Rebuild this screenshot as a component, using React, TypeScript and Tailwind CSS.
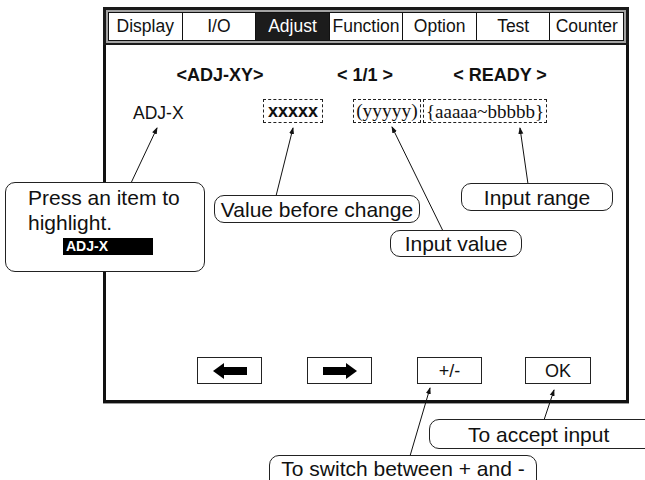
import React from 'react'

const tabs = ['Display', 'I/O', 'Adjust', 'Function', 'Option', 'Test', 'Counter']

function Arrow({ dir }: { dir: 'left' | 'right' }) {
  return (
    <svg width="34" height="16" viewBox="0 0 34 16">
      {dir === 'left' ? (
        <polygon points="0,8 11,0 11,4 34,4 34,12 11,12 11,16" fill="#000" />
      ) : (
        <polygon points="34,8 23,0 23,4 0,4 0,12 23,12 23,16" fill="#000" />
      )}
    </svg>
  )
}

function Callout({ className, children }: { className: string; children: React.ReactNode }) {
  return (
    <div
      className={`absolute flex items-center justify-center rounded-[10px] border border-[#222] bg-white text-[21px] leading-none text-[#111] ${className}`}
    >
      <span>{children}</span>
    </div>
  )
}

export default function App() {
  return (
    <div className="relative h-[480px] w-[645px] overflow-hidden bg-white font-['Liberation_Sans',Arial,sans-serif] text-[#111]">
      {/* screen */}
      <div className="ml-[103px] w-[526px] pt-[7px]">
        <div className="flex h-[38px] border-[3px] border-b-[2px] border-[#1a1a1a] bg-[#a3a3a3] p-[2px]">
          {tabs.map((t, i) => (
            <div
              key={t}
              className={`flex flex-1 items-center justify-center border-y-[1.5px] border-l-[1.5px] border-[#111] text-[17.5px] leading-none ${
                i === tabs.length - 1 ? 'border-r-[1.5px]' : ''
              } ${t === 'Adjust' ? 'bg-[#1c1c1c] text-white' : 'bg-white'}`}
            >
              {t}
            </div>
          ))}
        </div>

        <div className="flex h-[358px] flex-col border-x-[3px] border-b-[3px] border-[#111] shadow-[0_1px_0_#9a9a9a]">
          <div className="mt-[21px] flex text-[18px] font-bold leading-[18px]">
            <div className="ml-[44px] w-[140px] text-center">&lt;ADJ-XY&gt;</div>
            <div className="ml-[15px] w-[120px] text-center">&lt; 1/1 &gt;</div>
            <div className="ml-[15px] w-[120px] text-center">&lt; READY &gt;</div>
          </div>

          <div className="mt-[15px] flex items-center">
            <div className="ml-[27px] mt-[6px] w-[130px] text-[17.5px] leading-none">ADJ-X</div>
            <div className="flex h-[24px] w-[60px] items-center justify-center border border-dashed border-[#222] text-[18px] font-bold leading-none">
              xxxxx
            </div>
            <div className="ml-[30px] flex h-[24px] w-[68px] items-center justify-center border border-dashed border-[#222] font-['Liberation_Serif',serif] text-[19.5px] leading-none">
              (yyyyy)
            </div>
            <div className="ml-[2px] flex h-[24px] w-[124px] items-center justify-center border border-dashed border-[#222] font-['Liberation_Serif',serif] text-[19px] leading-none">
              {'{aaaaa~bbbbb}'}
            </div>
          </div>

          <div className="mb-[16px] mt-auto flex text-[18px] leading-none">
            <div className="ml-[91px] flex h-[27px] w-[65px] items-center justify-center border-[1.5px] border-[#222]">
              <Arrow dir="left" />
            </div>
            <div className="ml-[45px] flex h-[27px] w-[65px] items-center justify-center border-[1.5px] border-[#222]">
              <Arrow dir="right" />
            </div>
            <div className="ml-[45px] flex h-[27px] w-[65px] items-center justify-center border-[1.5px] border-[#222]">
              +/-
            </div>
            <div className="ml-[43px] flex h-[27px] w-[66px] items-center justify-center border-[1.5px] border-[#222]">
              OK
            </div>
          </div>
        </div>
      </div>

      {/* leader lines */}
      <svg className="pointer-events-none absolute left-0 top-0" width="645" height="480">
        <defs>
          <marker id="tip" markerWidth="7" markerHeight="6" refX="6" refY="3" orient="auto">
            <polygon points="0,0.5 7,3 0,5.5" fill="#111" />
          </marker>
        </defs>
        <g stroke="#111" strokeWidth="1" fill="none" markerEnd="url(#tip)">
          <line x1="131" y1="183" x2="157" y2="128" />
          <line x1="276" y1="196" x2="293" y2="128" />
          <line x1="443" y1="231" x2="392" y2="127" />
          <line x1="528" y1="184" x2="520" y2="128" />
          <line x1="410" y1="456" x2="430" y2="388" />
          <line x1="544" y1="420" x2="554" y2="390" />
        </g>
      </svg>

      {/* callouts */}
      <div className="absolute left-[5px] top-[182px] h-[90px] w-[200px] rounded-[10px] border border-[#222] bg-white pl-[22px] pt-[2px] text-[21px] leading-[25px]">
        <div>Press an item to</div>
        <div>highlight.</div>
        <div className="ml-[35px] mt-[3px] h-[17px] w-[90px] bg-black pl-[3px] text-[14px] font-bold leading-[17px] text-white">
          ADJ-X
        </div>
      </div>
      <Callout className="left-[214px] top-[195px] h-[28px] w-[206px]">Value before change</Callout>
      <Callout className="left-[390px] top-[230px] h-[27px] w-[132px]">Input value</Callout>
      <Callout className="left-[461px] top-[183px] h-[28px] w-[152px]">Input range</Callout>
      <Callout className="left-[429px] top-[419px] h-[30px] w-[250px] justify-start pl-[38px]">To accept input</Callout>
      <Callout className="left-[269px] top-[455px] h-[36px] w-[268px] items-start pt-[2px]">To switch between + and -</Callout>
    </div>
  )
}
